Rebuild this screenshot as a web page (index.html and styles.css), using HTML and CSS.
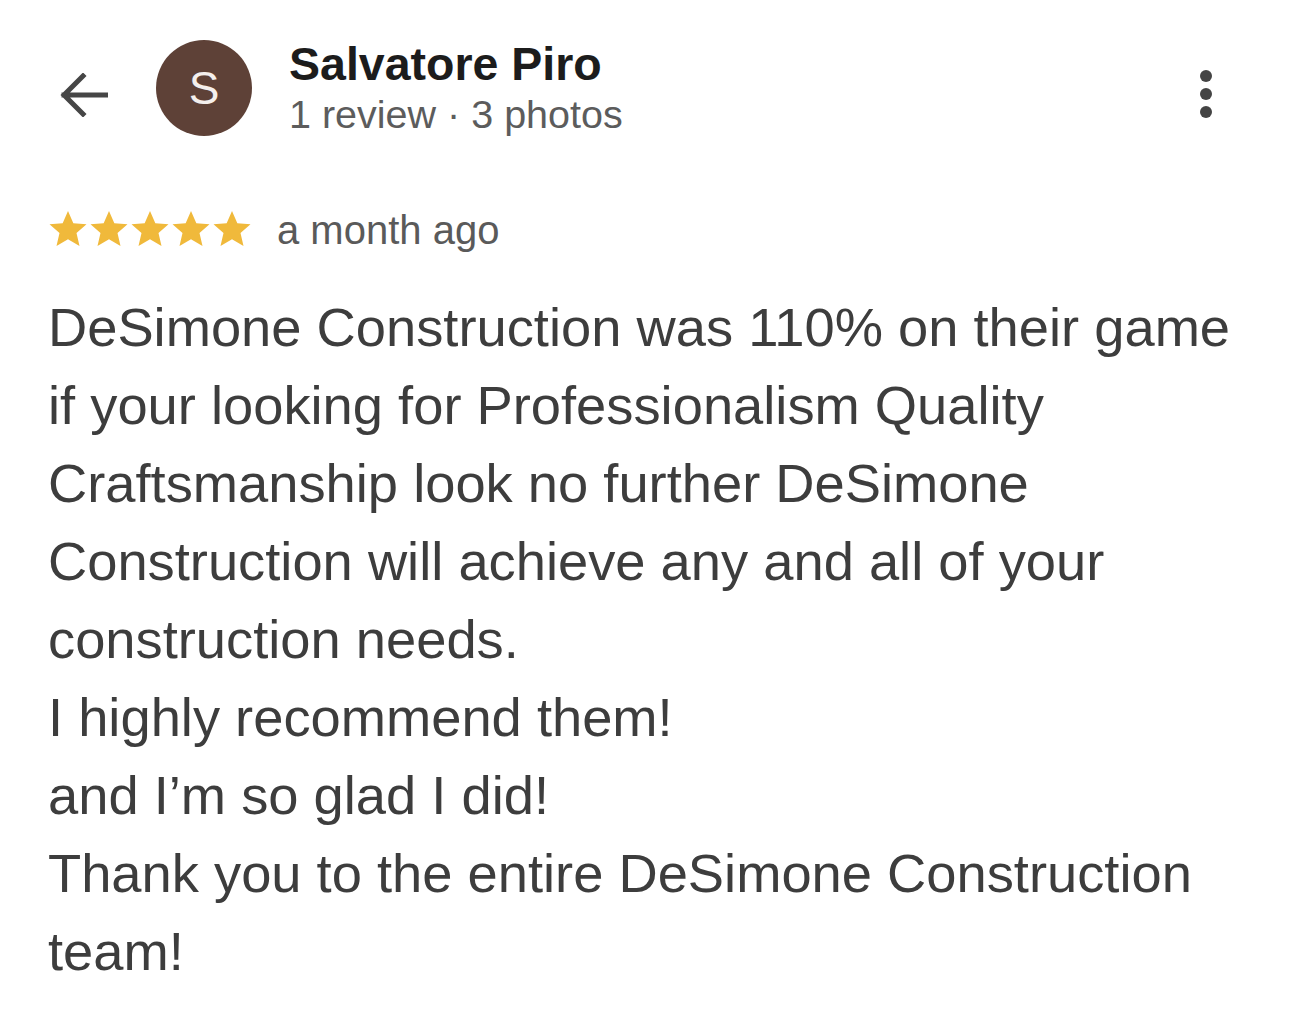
FILE: index.html
```html
<!DOCTYPE html>
<html lang="en">
<head>
<meta charset="utf-8">
<title>Review</title>
<link rel="stylesheet" href="styles.css">
</head>
<body>
<div class="page">
  <header class="header">
    <div class="back">
      <svg width="48" height="44" viewBox="0 0 48 44"><path d="M46 22H4M23 3L4 22l19 19" fill="none" stroke="#464646" stroke-width="5" stroke-linecap="square"/></svg>
    </div>
    <div class="avatar">S</div>
    <div class="who">
      <div class="name">Salvatore Piro</div>
      <div class="meta">1 review · 3 photos</div>
    </div>
    <div class="more">
      <span class="dot"></span><span class="dot"></span><span class="dot"></span>
    </div>
  </header>

  <div class="rating">
    <div class="stars">
      <svg class="star" viewBox="0 0 24 24"><path d="M12 1.2l3.2 7.3 7.9.7-6 5.2 1.8 7.8L12 18.1l-6.9 4.1 1.8-7.8-6-5.2 7.9-.7z"/></svg>
      <svg class="star" viewBox="0 0 24 24"><path d="M12 1.2l3.2 7.3 7.9.7-6 5.2 1.8 7.8L12 18.1l-6.9 4.1 1.8-7.8-6-5.2 7.9-.7z"/></svg>
      <svg class="star" viewBox="0 0 24 24"><path d="M12 1.2l3.2 7.3 7.9.7-6 5.2 1.8 7.8L12 18.1l-6.9 4.1 1.8-7.8-6-5.2 7.9-.7z"/></svg>
      <svg class="star" viewBox="0 0 24 24"><path d="M12 1.2l3.2 7.3 7.9.7-6 5.2 1.8 7.8L12 18.1l-6.9 4.1 1.8-7.8-6-5.2 7.9-.7z"/></svg>
      <svg class="star" viewBox="0 0 24 24"><path d="M12 1.2l3.2 7.3 7.9.7-6 5.2 1.8 7.8L12 18.1l-6.9 4.1 1.8-7.8-6-5.2 7.9-.7z"/></svg>
    </div>
    <span class="when">a month ago</span>
  </div>

  <p class="review">DeSimone Construction was 110% on their game if your looking for Professionalism Quality Craftsmanship look no further DeSimone Construction will achieve any and all of your construction needs.<br>I highly recommend them!<br>and I’m so glad I did!<br>Thank you to the entire DeSimone Construction team!</p>
</div>
</body>
</html>
```

FILE: styles.css
```css
html, body {
  margin: 0;
  padding: 0;
  background: #ffffff;
}

body {
  font-family: "Liberation Sans", Arial, Helvetica, sans-serif;
  color: #3c3c3c;
}

.page {
  width: 1290px;
  height: 1029px;
  overflow: hidden;
  box-sizing: border-box;
  padding: 39px 0 0 48px;
}

.header {
  display: flex;
  align-items: center;
  height: 100px;
  padding-right: 78px;
}

.back {
  width: 48px;
  height: 44px;
  margin-left: 12px;
  margin-top: 12px;
  display: flex;
}

.avatar {
  width: 96px;
  height: 96px;
  border-radius: 50%;
  background: #5e4137;
  color: #f4efed;
  margin-left: 48px;
  display: flex;
  align-items: center;
  justify-content: center;
  font-size: 46px;
  line-height: 1;
  margin-top: -2px;
}

.who {
  margin-left: 37px;
  flex: 1;
}

.name {
  font-size: 46.5px;
  line-height: 50px;
  font-weight: 700;
  color: #1c1c1c;
}

.meta {
  font-size: 39.5px;
  line-height: 50px;
  color: #5c5c5c;
}

.more {
  display: flex;
  flex-direction: column;
  gap: 6px;
  margin-top: 10px;
}

.dot {
  width: 12px;
  height: 12px;
  border-radius: 50%;
  background: #444444;
}

.rating {
  display: flex;
  align-items: center;
  height: 46px;
  margin-top: 67px;
}

.stars {
  display: flex;
  gap: 1px;
}

.star {
  width: 40px;
  height: 40px;
  fill: #f0b93b;
}

.when {
  margin-left: 25px;
  font-size: 40px;
  color: #5a5a5a;
  margin-top: 2px;
}

.review {
  margin: 37px 0 0 0;
  width: 1210px;
  font-size: 54.3px;
  line-height: 78px;
  color: #3d3d3d;
}
```
